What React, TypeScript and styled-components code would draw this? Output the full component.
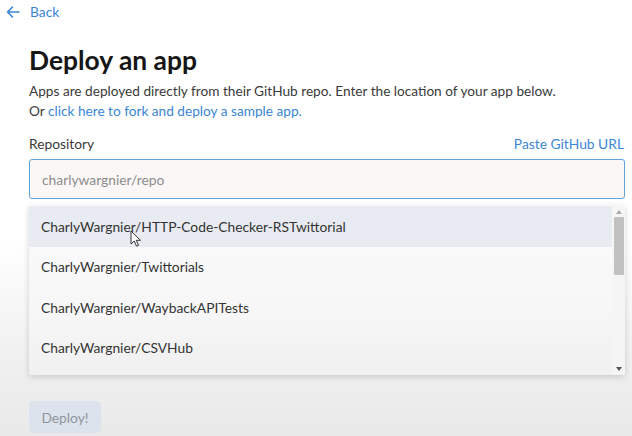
import React from 'react'
import styled, { createGlobalStyle } from 'styled-components'

const GlobalStyle = createGlobalStyle`
	html, body {
		margin: 0;
		padding: 0;
	}
	body {
		font-family: 'Lato', 'Noto Sans', sans-serif;
		color: #2d2d2d;
		background: linear-gradient(180deg, #ffffff 0%, #ffffff 55%, #f1f1f1 80%, #e9e9e9 100%);
		min-height: 436px;
		overflow: hidden;
	}
`

const Page = styled.div`
	width: 632px;
	height: 436px;
	box-sizing: border-box;
	padding: 3px 8px 0 29px;
`

const BackLink = styled.a`
	display: flex;
	align-items: center;
	gap: 9px;
	margin-left: -24px;
	color: #3a86d4;
	font-size: 13.8px;
	text-decoration: none;
	height: 17px;
	svg {
		width: 16px;
		height: 16px;
	}
`

const Title = styled.h1`
	margin: 23px 0 0;
	font-size: 26.4px;
	font-weight: 700;
	color: #161616;
	line-height: 34px;
`

const Intro = styled.p`
	margin: 4px 0 0;
	font-size: 13.65px;
	line-height: 20px;
	color: #3a3a3a;
	a {
		color: #3a86d4;
		text-decoration: none;
	}
`

const FieldHead = styled.div`
	display: flex;
	justify-content: space-between;
	align-items: center;
	margin-top: 14px;
	font-size: 13.8px;
	line-height: 18px;
	color: #3a3a3a;
	a {
		color: #3a86d4;
		text-decoration: none;
	}
`

const Input = styled.input`
	display: block;
	box-sizing: border-box;
	width: 596px;
	height: 40px;
	margin-top: 6px;
	padding: 0 12px;
	border: 1.5px solid #62a3dc;
	border-radius: 3px;
	background: #fbf7f7;
	font-family: inherit;
	font-size: 13.8px;
	color: #333;
	outline: none;
	&::placeholder {
		color: #8c8c8c;
	}
`

const Dropdown = styled.div`
	position: relative;
	width: 596px;
	height: 170px;
	margin-top: 6px;
	display: flex;
	background: linear-gradient(180deg, #fbfbfd 0%, #f7f7f8 60%, #f0f0f0 100%);
	box-shadow: 0 2px 6px rgba(0, 0, 0, 0.16);
	border-radius: 2px;
	overflow: hidden;
`

const List = styled.ul`
	list-style: none;
	margin: 0;
	padding: 1px 0 0;
	flex: 1;
`

const Item = styled.li<{ $active?: boolean }>`
	height: 40.5px;
	display: flex;
	align-items: center;
	padding-left: 12px;
	font-size: 13.8px;
	color: #333;
	background: ${p => (p.$active ? '#e8ebf1' : 'transparent')};
`

const Scrollbar = styled.div`
	width: 13px;
	display: flex;
	flex-direction: column;
	align-items: center;
	justify-content: space-between;
	padding: 5px 0 4px;
	box-sizing: border-box;
	background: #f5f5f5;
`

const Arrow = styled.span<{ $down?: boolean }>`
	width: 0;
	height: 0;
	border-left: 3px solid transparent;
	border-right: 3px solid transparent;
	${p =>
		p.$down
			? 'border-top: 4px solid #555;'
			: 'border-bottom: 4px solid #aaa;'}
`

const Thumb = styled.div`
	width: 10px;
	height: 58px;
	background: #c1c1c1;
	border-radius: 1px;
	margin-top: 3px;
	margin-bottom: auto;
`

const Cursor = styled.svg`
	position: absolute;
	left: 101px;
	top: 25px;
	width: 12px;
	height: 18px;
`

const DeployButton = styled.button`
	display: block;
	margin-top: 26px;
	width: 72px;
	height: 32px;
	border: none;
	border-radius: 4px;
	background: #dde3ec;
	color: #8f959c;
	font-family: inherit;
	font-size: 13.8px;
`

const repos = [
	'CharlyWargnier/HTTP-Code-Checker-RSTwittorial',
	'CharlyWargnier/Twittorials',
	'CharlyWargnier/WaybackAPITests',
	'CharlyWargnier/CSVHub',
]

export default function App() {
	return (
		<>
			<GlobalStyle />
			<Page>
				<BackLink href="#">
					<svg viewBox="0 0 16 16" fill="none" stroke="#3a86d4" strokeWidth="1.6" strokeLinecap="round" strokeLinejoin="round">
						<path d="M14 8H2.5M7.5 3L2.5 8l5 5" />
					</svg>
					Back
				</BackLink>
				<Title>Deploy an app</Title>
				<Intro>
					Apps are deployed directly from their GitHub repo. Enter the location of your app below.
					<br />
					Or <a href="#">click here to fork and deploy a sample app.</a>
				</Intro>
				<FieldHead>
					<span>Repository</span>
					<a href="#">Paste GitHub URL</a>
				</FieldHead>
				<Input placeholder="charlywargnier/repo" />
				<Dropdown>
					<List>
						{repos.map((r, i) => (
							<Item key={r} $active={i === 0}>
								{r}
							</Item>
						))}
					</List>
					<Scrollbar>
						<Arrow />
						<Thumb />
						<Arrow $down />
					</Scrollbar>
					<Cursor viewBox="0 0 12 18">
						<path d="M1 1v13l3.2-3 2.3 5.2 2-0.9-2.2-5H10.5z" fill="#fff" stroke="#333" strokeWidth="1" strokeLinejoin="round" />
					</Cursor>
				</Dropdown>
				<DeployButton>Deploy!</DeployButton>
			</Page>
		</>
	)
}
